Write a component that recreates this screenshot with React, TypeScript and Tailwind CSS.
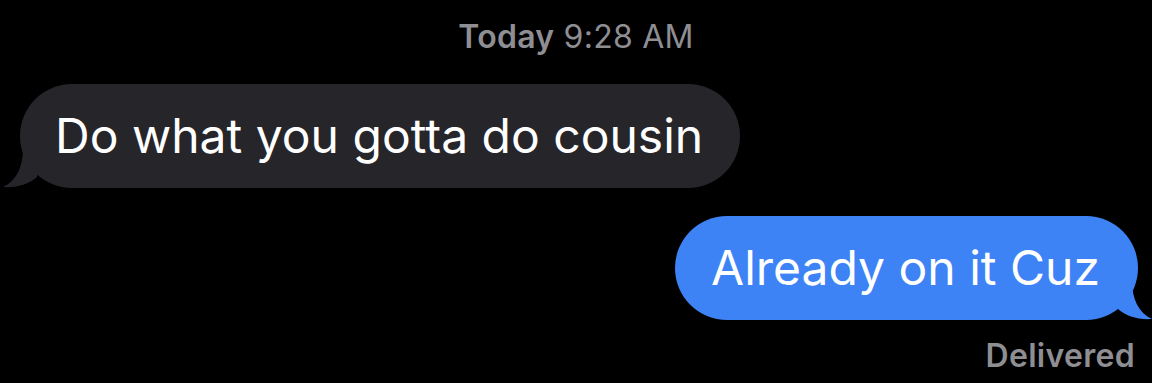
import React from "react";

function GrayTail() {
  return (
    <svg className="absolute bottom-0 -left-[17px]" width="40" height="40" viewBox="0 0 40 40">
      <path d="M20 0 C20 20 13 33 0 39 C14 40 26 36 34 29 L40 0 Z" fill="#26252a" />
    </svg>
  );
}

function BlueTail() {
  return (
    <svg className="absolute bottom-0 -right-[14px]" width="40" height="40" viewBox="0 0 40 40">
      <path d="M20 0 C20 20 27 33 40 39 C26 40 14 36 6 29 L0 0 Z" fill="#3d83f6" />
    </svg>
  );
}

export default function App() {
  return (
    <main className="h-[383px] w-full overflow-hidden bg-black font-['Inter','Liberation_Sans',sans-serif] antialiased">
      <div className="flex flex-col pt-[18px]">
        <p className="text-center text-[32px] leading-[38px] tracking-[0.25px] text-[#8e8e93]">
          <span className="font-semibold">Today</span> 9:28 AM
        </p>

        <div className="mt-[28px] pl-[20px] flex">
          <div className="relative flex h-[104px] items-center rounded-[52px] bg-[#26252a] pl-[35px] pr-[37px]">
            <GrayTail />
            <span className="relative text-[48px] leading-none text-white">Do what you gotta do cousin</span>
          </div>
        </div>

        <div className="mt-[28px] pr-[14px] flex justify-end">
          <div className="relative flex h-[104px] items-center rounded-[52px] bg-[#3d83f6] pl-[36px] pr-[38px]">
            <BlueTail />
            <span className="relative text-[48px] leading-none text-white">Already on it Cuz</span>
          </div>
        </div>

        <p className="mt-[17px] pr-[17px] text-right text-[32px] font-semibold leading-[38px] tracking-[0.3px] text-[#8e8e93]">
          Delivered
        </p>
      </div>
    </main>
  );
}
